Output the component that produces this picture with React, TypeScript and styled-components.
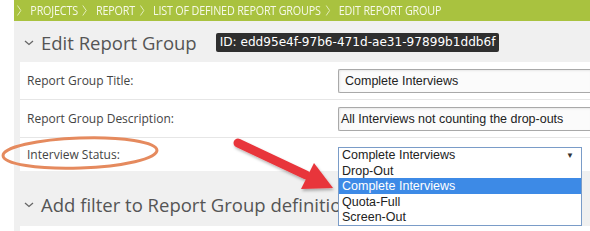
import React from "react";
import styled, { createGlobalStyle } from "styled-components";

const Global = createGlobalStyle`
  html, body { margin: 0; padding: 0; background: #fff; }
  body { width: 590px; height: 231px; overflow: hidden; }
`;

const Page = styled.div`
  position: relative;
  padding-left: 14px;
  width: 576px;
  height: 231px;
  overflow: hidden;
`;

const Breadcrumb = styled.div`
  height: 21px;
  background: #a9c23f;
  overflow: hidden;
`;

const Trail = styled.div`
  height: 21px;
  display: flex;
  align-items: center;
  padding-left: 3px;
  transform: scaleX(0.86);
  transform-origin: left center;
  font-family: "Open Sans", sans-serif;
  font-size: 12.5px;
  letter-spacing: -0.2px;
  color: #f6f9e8;
  text-transform: uppercase;
  white-space: nowrap;
`;

const SepIcon = styled.svg`
  width: 6px;
  height: 11px;
  margin: 0 10px 0 5px;
  flex: none;
  &:first-child { margin-left: 0; }
`;

const Sep = () => (
  <SepIcon viewBox="0 0 6 11">
    <path d="M1 0.5 L5 5.5 L1 10.5" fill="none" stroke="#e6efc4" strokeWidth="1" />
  </SepIcon>
);

const Section = styled.div`
  background: #f0f0f0;
  padding-left: 6px;
`;

const SectionHead = styled.div<{ $h: number; $pt: number }>`
  height: ${(p) => p.$h}px;
  padding-top: ${(p) => p.$pt}px;
  box-sizing: border-box;
  display: flex;
  align-items: center;
  gap: 19px;
`;

const Title = styled.h2<{ $size: number }>`
  margin: 0;
  display: flex;
  align-items: center;
  gap: 7px;
  font-family: "Open Sans", sans-serif;
  font-weight: 400;
  font-size: ${(p) => p.$size}px;
  color: #555;
  white-space: nowrap;
`;

const Chevron = styled.svg`
  width: 10px;
  height: 6px;
  margin-left: 4px;
  flex: none;
`;

const Badge = styled.span`
  background: #2f2f2f;
  color: #fff;
  font-family: "DejaVu Sans", sans-serif;
  font-size: 12.1px;
  height: 19px;
  line-height: 19px;
  padding: 0 4px;
  border-radius: 2px;
  white-space: nowrap;
`;

const Form = styled.div<{ $h?: number }>`
  background: #fff;
  ${(p) => (p.$h ? `height: ${p.$h}px;` : "")}
`;

const Row = styled.div<{ $h: number }>`
  height: ${(p) => p.$h}px;
  display: flex;
  align-items: center;
  border-bottom: 1px solid #e6e6e6;
  box-sizing: border-box;
  &:last-child { border-bottom: none; }
`;

const Label = styled.div`
  width: 318px;
  flex: none;
  box-sizing: border-box;
  padding-left: 7px;
  font-family: "Open Sans", sans-serif;
  font-size: 12px;
  color: #444;
`;

const TextInput = styled.div<{ $pad: number }>`
  flex: 1;
  height: 22px;
  border: 1px solid #a9a9a9;
  border-right: none;
  border-radius: 2px 0 0 2px;
  box-shadow: inset 1px 1px 2px rgba(0, 0, 0, 0.08);
  background: #fbfbfb;
  display: flex;
  align-items: center;
  padding-left: ${(p) => p.$pad}px;
  font-family: "Liberation Sans", Arial, sans-serif;
  font-size: 12.5px;
  color: #222;
  white-space: nowrap;
`;

const SelectWrap = styled.div`
  position: relative;
  width: 244px;
  margin-top: 1px;
`;

const SelectBox = styled.div`
  height: 15px;
  border: 1px solid #7a9cc8;
  display: flex;
  align-items: center;
  justify-content: space-between;
  padding: 0 7px 0 3px;
  background: #fff;
  font-family: "Liberation Sans", Arial, sans-serif;
  font-size: 12.5px;
  color: #222;
`;

const Arrow = styled.span`
  font-size: 8px;
  color: #333;
`;

const DropList = styled.div`
  position: absolute;
  top: 16px;
  left: 0;
  right: 0;
  background: #fff;
  border: 1px solid #7a9cc8;
  border-top: none;
  z-index: 2;
`;

const Option = styled.div<{ $sel?: boolean }>`
  height: 15.5px;
  line-height: 17px;
  padding-left: 3px;
  font-family: "Liberation Sans", Arial, sans-serif;
  font-size: 12.5px;
  background: ${(p) => (p.$sel ? "#3d8ae6" : "#fff")};
  color: ${(p) => (p.$sel ? "#fff" : "#222")};
`;

const Overlay = styled.svg`
  position: absolute;
  left: 0;
  top: 0;
  width: 590px;
  height: 231px;
  pointer-events: none;
  z-index: 3;
`;

const Down = () => (
  <Chevron viewBox="0 0 10 6">
    <path d="M1 1 L5 4.5 L9 1" fill="none" stroke="#666" strokeWidth="1.3" />
  </Chevron>
);

export default function App() {
  return (
    <>
      <Global />
      <Page>
        <Breadcrumb>
          <Trail>
            <Sep />
            <span>Projects</span>
            <Sep />
            <span>Report</span>
            <Sep />
            <span>List of defined Report Groups</span>
            <Sep />
            <span>Edit Report Group</span>
          </Trail>
        </Breadcrumb>
        <Section>
          <SectionHead $h={41} $pt={2}>
            <Title $size={18.5}>
              <Down />
              Edit Report Group
            </Title>
            <Badge>ID: edd95e4f-97b6-471d-ae31-97899b1ddb6f</Badge>
          </SectionHead>
          <Form>
            <Row $h={38}>
              <Label>Report Group Title:</Label>
              <TextInput $pad={6}>Complete Interviews</TextInput>
            </Row>
            <Row $h={38}>
              <Label>Report Group Description:</Label>
              <TextInput $pad={2}>All Interviews not counting the drop-outs</TextInput>
            </Row>
            <Row $h={33}>
              <Label>Interview Status:</Label>
              <SelectWrap>
                <SelectBox>
                  <span>Complete Interviews</span>
                  <Arrow>▼</Arrow>
                </SelectBox>
                <DropList>
                  <Option>Drop-Out</Option>
                  <Option $sel>Complete Interviews</Option>
                  <Option>Quota-Full</Option>
                  <Option>Screen-Out</Option>
                </DropList>
              </SelectWrap>
            </Row>
          </Form>
          <SectionHead $h={55} $pt={12}>
            <Title $size={18.5}>
              <Down />
              Add filter to Report Group definition
            </Title>
          </SectionHead>
          <Form $h={20} />
        </Section>
        <Overlay viewBox="0 0 590 231">
          <defs>
            <filter id="sh" x="-20%" y="-20%" width="140%" height="140%">
              <feDropShadow dx="1" dy="2" stdDeviation="1.5" floodColor="#000" floodOpacity="0.3" />
            </filter>
          </defs>
          <ellipse cx="80" cy="153" rx="77" ry="15" transform="rotate(-2 80 153)" fill="none" stroke="#e58a5e" strokeWidth="3" />
          <g filter="url(#sh)">
            <line x1="238" y1="143" x2="306" y2="175" stroke="#e8343a" strokeWidth="9" strokeLinecap="round" />
            <polygon points="333,188 301,189 314,163" fill="#e8343a" />
          </g>
        </Overlay>
      </Page>
    </>
  );
}
